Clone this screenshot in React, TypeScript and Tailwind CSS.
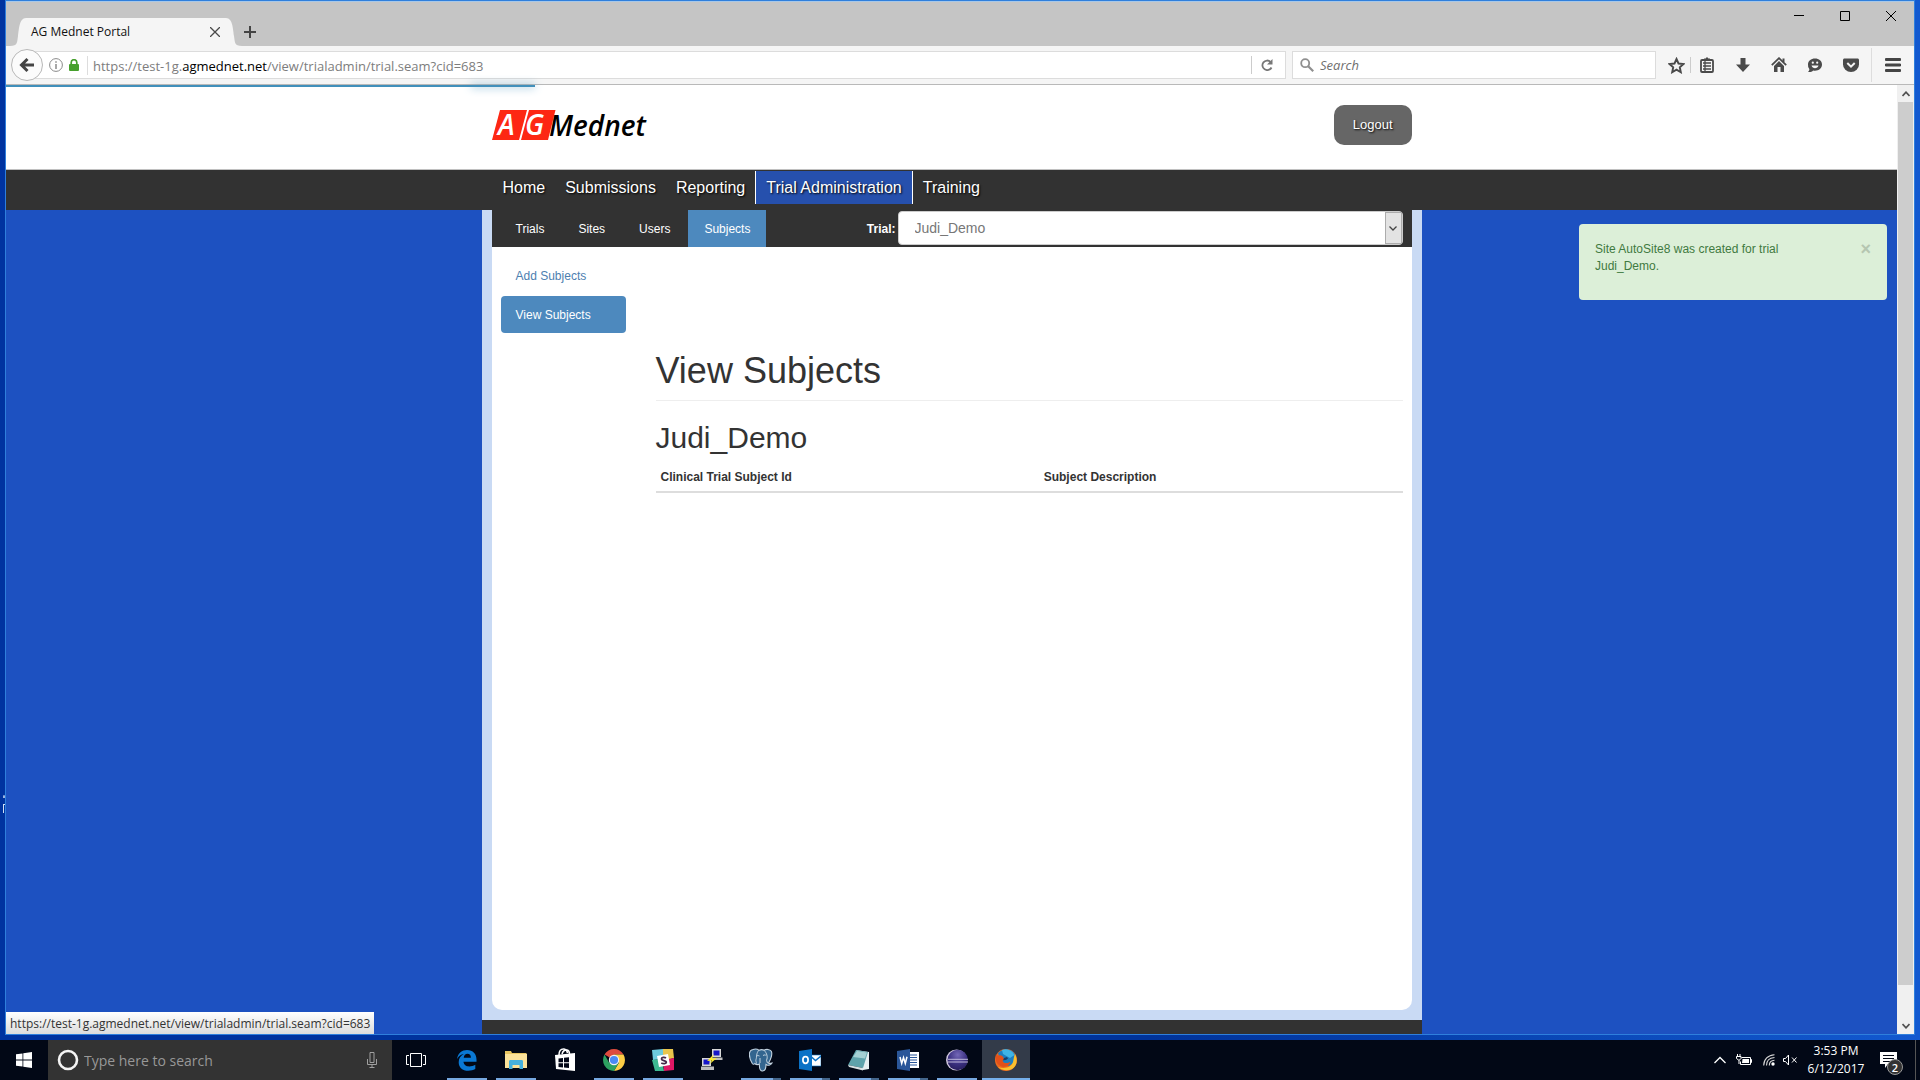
import React from "react";

const UI = "font-['Open_Sans','Noto_Sans',sans-serif]";

type TaskItem = { name: string; icon: React.ReactNode; open?: "single" | "stack" | "active" };

function Svg({ size, box, children }: { size: string; box: string; children: React.ReactNode }) {
  return (
    <svg className={"block shrink-0 " + size} viewBox={box} fill="none" aria-hidden="true">
      {children}
    </svg>
  );
}

const EdgeIcon = (
  <Svg size="size-[22px]" box="0 0 22 22">
    <path
      d="M1 10C2 4 6 1 11 1c6 0 9.500 4 9.500 9.500v2.300H7.500c.2 3 2.600 4.700 5.700 4.700 2.200 0 4.300-.6 6.100-1.700v4.300c-2 1.200-4.400 1.700-7 1.700-6 0-9.600-3.300-9.600-8.600 0-3.500 1.900-6.500 5.100-8.100C5 5.500 2.700 7.200 1 10Zm6.700-1.300h7.200c0-2.600-1.200-4-3.500-4-2 0-3.300 1.500-3.700 4Z"
      fill="#0a78d4"
    />
  </Svg>
);
const FolderIcon = (
  <Svg size="size-[22px]" box="0 0 22 22">
    <path d="M0 2h6l1 2h14.500v15H0Z" fill="#e8c560" />
    <path d="M0 5h22v14H0Z" fill="#fbe29a" />
    <path d="M4 12.500c0-1 .6-1.500 1.500-1.500h11c1 0 1.500.5 1.500 1.500V20h-3.500v-4h-7v4H4Z" fill="#45b0dc" />
  </Svg>
);
const StoreIcon = (
  <Svg size="h-[24px] w-[22px]" box="0 0 22 24">
    <path d="M5 7c0-4 2-6 4.500-6S13 3 13.500 5M8 6c1-3 3-4.500 5-4s2.500 2 2.500 4" stroke="#fff" strokeWidth="1.500" />
    <path d="M1 7 21 5v18L2 21Z" fill="#fff" />
    <path d="m4.500 10.500 4.500-.6v4.300H4.500Zm5.500-.7 5-.6v5h-5Zm-5.500 5.400H9v4.200l-4.500-.5Zm5.500 0h5v4.900l-5-.6Z" fill="#020617" />
  </Svg>
);
const ChromeIcon = (
  <Svg size="size-[22px]" box="0 0 22 22">
    <path d="M11 11 1.500 5.500A11 11 0 0 1 20.500 5.500H11Z" fill="#dd4b3e" />
    <path d="M11 11V5.500h9.500A11 11 0 0 1 11 22l4.800-8.200Z" fill="#fccd45" />
    <path d="M11 11l4.800 2.800L11 22A11 11 0 0 1 1.500 5.500l4.700 8.200Z" fill="#2da160" />
    <circle cx="11" cy="11" r="5.200" fill="#f4f4f4" />
    <circle cx="11" cy="11" r="4.100" fill="#4a8af4" />
  </Svg>
);
const SlackIcon = (
  <Svg size="size-[22px]" box="0 0 22 22">
    <path d="M0 1 11 0v10L1 11Z" fill="#6ecadc" />
    <path d="M11 0h10l1 9-11 3Z" fill="#e9c54b" />
    <path d="m0 11 10-1 2 12H3Z" fill="#3eb991" />
    <path d="m11 11 11-2v12l-10 1Z" fill="#e01765" />
    <path d="m5 7 11-2 2 11-11 2Z" fill="#fff" />
    <path d="M14 9c-1.500-1-4.500-.8-4.500 1 0 2 4.800 1 4.800 3.200 0 1.700-3.200 1.900-5 .8" stroke="#472a49" strokeWidth="1.800" />
  </Svg>
);
const PuttyIcon = (
  <Svg size="size-[22px]" box="0 0 22 22">
    <path d="M11 0h9v8h-9ZM1 9h9v8H1Z" fill="#d8d8d8" />
    <path d="M12.500 1.500h6v5h-6ZM2.500 10.500h6v5h-6Z" fill="#1717c8" />
    <path d="M10 8.500h11.500v2.500H10ZM0 17.500h13V21H0Z" fill="#bdbdbd" />
    <path d="m13 5-7 7 5-.5-3 4 8-6.500-5 .5Z" fill="#ffee2e" />
  </Svg>
);
const PostgresIcon = (
  <Svg size="size-[24px]" box="0 0 24 24">
    <path
      d="M4 1.500c3-1 5 0 6 .7 2-.8 4-.6 5 0 2-1.200 6-1.200 7.300 1 1.500 3-.8 9-2.800 11.800 1 .8 2.500.3 3.500 0-1 2-3.500 2.500-5 2l-1-.5c0 3-.2 6.500-3.500 6.500-3.500 0-3-4-3.200-7-1.500.8-3 1-4.500-.5-.8 1-1.700 1-2.500 0C1.500 12.500 0 8.500.500 5 .8 3 2 2 4 1.500Z"
      fill="#33658f"
      stroke="#c3d3e0"
      strokeWidth="1.100"
    />
    <path d="M10 2.200C7 5 8 9 7 11.500c-.5 1.500.5 3 .5 4M15 2.200c3 3 4 7 2.500 10l1 3M10.500 8c-2-1-3 0-3 .5M14 7.500c1.500-1 3-.5 3 0M11 15V10" stroke="#c3d3e0" strokeWidth="1" />
  </Svg>
);
const OutlookIcon = (
  <Svg size="size-[22px]" box="0 0 22 22">
    <path d="M12 6h10v11H12Z" fill="#fff" stroke="#0b72c6" strokeWidth=".6" />
    <path d="m12 7.500 4.500 4L22 7" stroke="#0b72c6" strokeWidth="1.500" />
    <path d="m0 2 13-2v22L0 20Z" fill="#0b72c6" />
    <ellipse cx="6.500" cy="11" rx="2.600" ry="3.300" stroke="#fff" strokeWidth="1.700" />
  </Svg>
);
const NotepadIcon = (
  <Svg size="size-[22px]" box="0 0 22 22">
    <path d="M8 1 21 3v17L15 21Z" fill="#e6eef0" />
    <path d="M8 1 20 3l-5 16L0 16Z" fill="#5fa3ab" />
    <path d="m9 2 10 1.500-2 6L5 8Z" fill="#a4d0d3" />
    <path d="m0 16 15 3v2.500L1 18Z" fill="#d8e2e4" />
  </Svg>
);
const WordIcon = (
  <Svg size="size-[22px]" box="0 0 22 22">
    <path d="M12 3h10v16H12Z" fill="#fff" />
    <path d="M13 6h7M13 8.500h7M13 11h7M13 13.500h7M13 16h7" stroke="#2a5699" strokeWidth="1.100" />
    <path d="m0 2 13-2v22L0 20Z" fill="#2a5699" />
    <path d="m3 8 1.700 6.500L6.500 8.500l1.800 6L10 7.800" stroke="#fff" strokeWidth="1.500" />
  </Svg>
);
const EclipseIcon = (
  <Svg size="size-[22px]" box="0 0 22 22">
    <defs>
      <radialGradient id="eclipseBall" cx="0.5" cy="0.25" r="0.75">
        <stop offset="0" stopColor="#7468b8" />
        <stop offset="0.600" stopColor="#3a3080" />
        <stop offset="1" stopColor="#281f5e" />
      </radialGradient>
    </defs>
    <circle cx="10.500" cy="11" r="10.500" fill="#cfc6de" />
    <circle cx="11.700" cy="11" r="10.200" fill="url(#eclipseBall)" />
    <path d="M2 10.300h20M2 13h20" stroke="#cfc8e4" strokeWidth=".9" />
  </Svg>
);
const FirefoxIcon = (
  <Svg size="size-[24px]" box="0 0 24 24">
    <circle cx="12" cy="12" r="11" fill="#ec6a1e" />
    <path d="M4 5a11 11 0 0 1 14-2c3 2 4 6 3 11l-6 4-8-3Z" fill="#1d7ec0" />
    <path d="M8 2c5-2 10 0 12.500 5L16 10 9 6Z" fill="#3fb4e6" />
    <path d="M21 6c3 6 2 12-3 15-5 2.500-11 1-14-2 6 2 13 1 15-5 .8-3 .7-5 2-8Z" fill="#f9c02f" />
    <path d="M2 6c0 1 1.500 1.500 3 1.500C7 7 9 8 9.500 10c2.500 0 1.500 2-1 2.500.5 3 5 3.500 8 1-1 5-6 6.500-10 4.500C2 16 1 11 2 6Z" fill="#e2501a" />
    <path d="m10 10 3-1 1 1.500-2 1.500-3 .3Z" fill="#16406b" />
  </Svg>
);

const tasks: TaskItem[] = [
  { name: "Microsoft Edge", icon: EdgeIcon, open: "single" },
  { name: "File Explorer", icon: FolderIcon, open: "single" },
  { name: "Store", icon: StoreIcon },
  { name: "Google Chrome", icon: ChromeIcon, open: "single" },
  { name: "Slack", icon: SlackIcon, open: "single" },
  { name: "PuTTY", icon: PuttyIcon },
  { name: "pgAdmin", icon: PostgresIcon, open: "stack" },
  { name: "Outlook", icon: OutlookIcon, open: "stack" },
  { name: "Notepad", icon: NotepadIcon, open: "stack" },
  { name: "Word", icon: WordIcon, open: "stack" },
  { name: "Eclipse", icon: EclipseIcon, open: "single" },
  { name: "Firefox", icon: FirefoxIcon, open: "active" },
];

function TitleBar() {
  return (
    <div className="flex h-[45px] shrink-0 items-end bg-[#c5c5c5] shadow-[inset_0_1px_0_#a8c8e8]">
      <div className="flex h-[28px] items-end pl-1">
        <svg className="block h-[28px] w-4" viewBox="0 0 16 28" aria-hidden="true">
          <path d="M0 28c8 0 7-4 8-10S9 0 16 0v28Z" fill="#f5f5f5" />
        </svg>
        <div className="flex h-[28px] w-[200px] items-center justify-between bg-[#f5f5f5] pr-[6px] pl-[5px]">
          <span className="text-xs text-[#111]">AG Mednet Portal</span>
          <button type="button" aria-label="Close tab">
            <Svg size="size-[10px]" box="0 0 10 10">
              <path d="m0 0 10 10M10 0 0 10" stroke="#4a4a4a" strokeWidth="1.300" />
            </Svg>
          </button>
        </div>
        <svg className="block h-[28px] w-4" viewBox="0 0 16 28" aria-hidden="true">
          <path d="M16 28c-8 0-7-4-8-10S7 0 0 0v28Z" fill="#f5f5f5" />
        </svg>
      </div>
      <button type="button" aria-label="New tab" className="mb-2 ml-0.5">
        <Svg size="size-3" box="0 0 12 12">
          <path d="M6 0v12M0 6h12" stroke="#444" strokeWidth="2" />
        </Svg>
      </button>
      <div className="ml-auto flex items-center gap-9 self-start pt-[10px] pr-[18px]">
        <button type="button" aria-label="Minimize">
          <Svg size="size-[10px]" box="0 0 10 10">
            <path d="M0 4.500h10" stroke="#000" />
          </Svg>
        </button>
        <button type="button" aria-label="Maximize">
          <Svg size="size-[10px]" box="0 0 10 10">
            <path d="M.5.5h9v9h-9Z" stroke="#000" />
          </Svg>
        </button>
        <button type="button" aria-label="Close">
          <Svg size="size-[10px]" box="0 0 10 10">
            <path d="m0 0 10 10M10 0 0 10" stroke="#000" />
          </Svg>
        </button>
      </div>
    </div>
  );
}

function NavBar() {
  return (
    <div className="flex h-[39px] shrink-0 items-center border-b border-[#b9b9b9] bg-[#f5f5f5] pl-[5px]">
      <button
        type="button"
        aria-label="Back"
        className="z-10 flex size-8 shrink-0 items-center justify-center rounded-full border border-[#b8b8b8] bg-[#fbfbfb]"
      >
        <Svg size="size-4" box="0 0 16 16">
          <path d="M15 8H3M8.500 2 2.500 8l6 6" stroke="#444" strokeWidth="3" />
        </Svg>
      </button>
      <div className="-ml-2 flex h-[28px] grow items-center border border-[#dcdcdc] bg-white pl-[13px]">
        <Svg size="size-[14px]" box="0 0 14 14">
          <circle cx="7" cy="7" r="6.400" stroke="#8a8a8a" />
          <path d="M7 6v5M7 3.200v1.600" stroke="#8a8a8a" strokeWidth="1.500" />
        </Svg>
        <div className="ml-[6px] mr-2">
          <Svg size="h-3 w-[10px]" box="0 0 10 12">
            <path d="M2.200 6V3.500a2.800 2.800 0 0 1 5.600 0V6" stroke="#46a02c" strokeWidth="1.700" />
            <rect y="5" width="10" height="7" rx="1" fill="#46a02c" />
          </Svg>
        </div>
        <div className="border-l border-[#ddd] pt-px pl-[5px] text-[13px] leading-[18px] whitespace-nowrap text-[#7d7d7d]">
          https://test-1g.<span className="text-black">agmednet.net</span>/view/trialadmin/trial.seam?cid=683
        </div>
        <button type="button" aria-label="Reload" className="ml-auto border-l border-[#ccc] py-[3px] pr-3 pl-[9px]">
          <Svg size="size-3" box="0 0 12 12">
            <path d="M10.500 8.500A4.800 4.800 0 1 1 9.500 2.800" stroke="#777" strokeWidth="1.800" />
            <path d="M11.500 0v5.500H6Z" fill="#777" />
          </Svg>
        </button>
      </div>
      <label className="ml-[6px] flex h-[28px] w-[364px] items-center gap-[6px] border border-[#dcdcdc] bg-white pl-[7px]">
        <Svg size="size-[14px]" box="0 0 14 14">
          <circle cx="5.200" cy="5.200" r="4" stroke="#8f8f8f" strokeWidth="1.800" />
          <path d="m8.200 8.200 5 5" stroke="#8f8f8f" strokeWidth="2.200" />
        </Svg>
        <input
          type="text"
          aria-label="Search"
          placeholder="Search"
          className="min-w-0 grow bg-transparent pt-px text-[13px] italic outline-none placeholder:text-[#6f6f6f]"
        />
      </label>
      <div className="flex items-center pl-3">
        <button type="button" aria-label="Bookmark" className="pr-[5px]">
          <Svg size="size-[17px]" box="0 0 17 17">
            <path d="m8.500 2 2 4.500 5 .5-3.700 3.300 1 4.900-4.300-2.500-4.300 2.500 1-4.900L1.500 7l5-.5Z" stroke="#4a4a4a" strokeWidth="1.900" />
          </Svg>
        </button>
        <div className="flex items-center gap-5 border-l border-[#ccc] pl-2">
          <button type="button" aria-label="Bookmarks list">
            <Svg size="size-4" box="0 0 16 16">
              <path d="M5 3V1.500h1.500L8 0l1.500 1.500H11V3" fill="#4a4a4a" />
              <rect x="2" y="3" width="12" height="12" rx="1" stroke="#4a4a4a" strokeWidth="1.800" />
              <path d="M4 6h8M4 9h8M4 12h8M6 4v10" stroke="#4a4a4a" strokeWidth="1.300" />
            </Svg>
          </button>
          <button type="button" aria-label="Downloads">
            <Svg size="size-4" box="0 0 16 16">
              <path d="M5.500 1h5v6.500H15L8 15 1 7.500h4.500Z" fill="#4a4a4a" />
            </Svg>
          </button>
          <button type="button" aria-label="Home">
            <Svg size="size-4" box="0 0 16 16">
              <path d="m.8 8.200 7.200-7 7.200 7" stroke="#4a4a4a" strokeWidth="1.800" />
              <path d="m3 9 5-5 5 5v6H9.500v-5h-3v5H3ZM11.500 1.500h2V5h-2Z" fill="#4a4a4a" />
            </Svg>
          </button>
          <button type="button" aria-label="Chat">
            <Svg size="size-4" box="0 0 16 16">
              <path d="M8 1.500c4 0 7 2.500 7 6s-3 6.200-7 6.200c-.6 0-1.200 0-1.800-.2C5 15 3 15.200 1 15c1-.8 1.500-2 1.300-3A6 6 0 0 1 1 7.500c0-3.500 3-6 7-6Z" fill="#4a4a4a" />
              <path d="M4.500 8.500c1 3.500 6 3.500 7 0Z" fill="#f5f5f5" />
              <circle cx="5.800" cy="5.700" r="1.100" fill="#f5f5f5" />
              <circle cx="10.200" cy="5.700" r="1.100" fill="#f5f5f5" />
            </Svg>
          </button>
          <button type="button" aria-label="Pocket">
            <Svg size="size-4" box="0 0 16 16">
              <path d="M1.500 1.500h13c.8 0 1.500.6 1.500 1.500v4.500a8 7.500 0 0 1-16 0V3c0-.9.700-1.500 1.500-1.500Z" fill="#4a4a4a" />
              <path d="m4.300 6 3.700 3.600L11.700 6" stroke="#f5f5f5" strokeWidth="2" />
            </Svg>
          </button>
        </div>
        <button type="button" aria-label="Menu" className="ml-3 flex h-[34px] items-center border-l border-[#ddd] px-[13px]">
          <Svg size="h-[14px] w-4" box="0 0 16 14">
            <path d="M1 1.500h14M1 7h14M1 12.500h14" stroke="#444" strokeWidth="2.800" strokeLinecap="round" />
          </Svg>
        </button>
      </div>
    </div>
  );
}

function Logo() {
  return (
    <a href="#home" aria-label="AG Mednet" className="mt-4 block">
      <svg className="block h-12 w-[180px]" viewBox="0 -8 180 48" aria-hidden="true">
        <path d="M8 1h27l-8 30H0Z" fill="#fd2713" />
        <path d="M37 1h26.500L56 31H29Z" fill="#fd2713" />
        <g className="font-['Open_Sans',sans-serif] font-semibold italic" fontSize="28">
          <text x="6" y="26" fill="#fff">
            A
          </text>
          <text x="33" y="26" fill="#fff">
            G
          </text>
          <text x="57" y="27" fill="#000">
            Mednet
          </text>
        </g>
      </svg>
    </a>
  );
}

const mainLinks = ["Home", "Submissions", "Reporting", "Trial Administration", "Training"];

function Page() {
  return (
    <div className="flex min-w-0 grow flex-col bg-[#1d51c1] font-['Liberation_Sans',Arial,sans-serif] text-xs">
      <header className="relative h-[85px] shrink-0 border-b border-[#c0c0c0] bg-white">
        <div className="absolute top-0 left-0 h-0.5 w-[28%] bg-[#4190bb]">
          <div className="ml-auto h-0.5 w-16 shadow-[0_0_8px_#4190bb]" />
        </div>
        <div className="mx-auto flex max-w-[920px] items-start justify-between">
          <Logo />
          <button
            type="button"
            className="mt-5 h-10 rounded-[10px] bg-[#666] px-[19px] text-[13px] text-white [text-shadow:1px_1px_2px_#000]"
          >
            Logout
          </button>
        </div>
      </header>
      <nav className="h-10 shrink-0 bg-[#323232]">
        <div className="mx-auto flex max-w-[920px] pt-px pl-px text-base text-white">
          {mainLinks.map((l) => (
            <a
              key={l}
              href={"#" + l}
              className={
                "h-[33px] px-[10px] leading-[33px] [text-shadow:1px_1px_2px_#000] " +
                (l === "Trial Administration" ? "border-x border-white bg-[#2650ad]" : "")
              }
            >
              {l}
            </a>
          ))}
        </div>
      </nav>
      <div className="flex min-h-0 grow">
        <div className="flex-1" />
        <main className="flex w-[940px] flex-col">
          <div className="flex grow flex-col bg-[#c9daf4] px-[10px] pb-[10px]">
            <div className="flex h-[37px] items-center bg-[#323232] pl-2 text-white">
              <div className="flex gap-0.5 self-stretch leading-[38px]">
                <a href="#trials" className="px-4">Trials</a>
                <a href="#sites" className="px-4">Sites</a>
                <a href="#users" className="px-4">Users</a>
                <a href="#subjects" className="bg-[#4d89be] px-4">Subjects</a>
              </div>
              <label htmlFor="trial" className="mr-0.5 ml-auto font-bold">
                Trial:
              </label>
              <div className="relative mr-[9px] mb-px w-[505px]">
                <select
                  id="trial"
                  className="block h-[34px] w-full appearance-none rounded border border-[#ccc] bg-white px-4 text-sm text-[#777]"
                >
                  <option>Judi_Demo</option>
                </select>
                <div className="pointer-events-none absolute inset-y-px right-px flex w-[17px] items-center justify-center border border-[#acacac] bg-[#e3e3e3]">
                  <Svg size="h-[5px] w-2" box="0 0 8 5">
                    <path d="m.5.5 3.500 3.500L7.500.5" stroke="#444" strokeWidth="1.300" />
                  </Svg>
                </div>
              </div>
            </div>
            <div className="flex grow rounded-b-[10px] bg-white pr-[9px] pl-[9px]">
              <aside className="flex w-[125px] shrink-0 flex-col gap-0.5 pt-[10px] leading-[17px]">
                <a href="#add" className="px-[15px] pt-[11px] pb-[9px] text-[#4d80b0]">Add Subjects</a>
                <a href="#view" className="rounded bg-[#4d89be] px-[15px] pt-[11px] pb-[9px] text-white">View Subjects</a>
              </aside>
              <section className="ml-[30px] grow pt-[104px] text-[#333]">
                <h1 className="border-b border-[#eee] pb-[9px] text-4xl leading-10">View Subjects</h1>
                <h2 className="mt-5 mb-[10px] text-3xl leading-[33px]">Judi_Demo</h2>
                <table className="w-full table-fixed text-left">
                  <thead>
                    <tr className="border-b-2 border-[#ddd] leading-[17px]">
                      <th className="w-[51.3%] px-[5px] py-[5px]">Clinical Trial Subject Id</th>
                      <th className="px-[5px] py-[5px]">Subject Description</th>
                    </tr>
                  </thead>
                </table>
              </section>
            </div>
          </div>
          <footer className="h-[14px] shrink-0 bg-[#323232]" />
        </main>
        <div className="flex-1">
          <div role="status" className="mt-[14px] mr-[10px] ml-auto flex h-[76px] w-[308px] justify-between rounded bg-[#dcefd8] py-[17px] pr-4 pl-4 leading-[17px] text-[#3f7a41]">
            <p className="w-[220px]">Site AutoSite8 was created for trial Judi_Demo.</p>
            <button type="button" aria-label="Dismiss" className="h-[17px] text-lg leading-[17px] font-bold text-[#b5c6b1]">
              ×
            </button>
          </div>
        </div>
      </div>
    </div>
  );
}

function Scrollbar() {
  return (
    <div className="flex w-[17px] shrink-0 flex-col bg-[#f0f0f0]" aria-hidden="true">
      <div className="flex h-[17px] items-center justify-center">
        <Svg size="h-[6px] w-2" box="0 0 8 6">
          <path d="m.5 5 3.500-3.800L7.500 5" stroke="#505050" strokeWidth="1.700" />
        </Svg>
      </div>
      <div className="grow">
        <div className="mx-px h-[96.500%] bg-[#cdcdcd]" />
      </div>
      <div className="flex h-[17px] items-center justify-center">
        <Svg size="h-[6px] w-2" box="0 0 8 6">
          <path d="m.5 1 3.500 3.800L7.500 1" stroke="#505050" strokeWidth="1.700" />
        </Svg>
      </div>
    </div>
  );
}

function Taskbar() {
  return (
    <div className="flex h-10 shrink-0 bg-[#020816] text-xs text-white">
      <button type="button" aria-label="Start" className="flex w-12 items-center justify-center">
        <Svg size="size-4" box="0 0 16 16">
          <path d="m0 2.300 6.500-.9v6.200H0Zm7.300-1L16 0v7.600H7.300ZM0 8.400h6.500v6.200L0 13.700Zm7.300 0H16V16l-8.700-1.300Z" fill="#fff" />
        </Svg>
      </button>
      <label className="flex w-[344px] items-center bg-[#333] pr-[14px] pl-[9px]">
        <Svg size="size-[22px]" box="0 0 22 22">
          <circle cx="11" cy="11" r="9" stroke="#f4f4f4" strokeWidth="2.600" />
        </Svg>
        <input
          type="text"
          aria-label="Type here to search"
          placeholder="Type here to search"
          className="ml-[5px] min-w-0 grow bg-transparent pt-0.5 text-sm outline-none placeholder:text-[#989898]"
        />
        <Svg size="h-4 w-3" box="0 0 12 16">
          <path d="M4 .500h4v10H4ZM1.500 7v5.500h9V7M6 12.500v3M3.500 15.500h5" stroke="#a0a0a0" />
        </Svg>
      </label>
      <button type="button" aria-label="Task view" className="flex w-12 items-center justify-center">
        <Svg size="h-4 w-5" box="0 0 20 16">
          <path d="M4.500 1.500h11v13h-11ZM3 3.500H.500v9H3M17 3.500h2.500v9H17" stroke="#fff" />
        </Svg>
      </button>
      <div className="ml-[3px] flex gap-px">
        {tasks.map((t) => (
          <button
            key={t.name}
            type="button"
            aria-label={t.name}
            className={"flex w-12 flex-col items-center " + (t.open === "active" ? "bg-[#333b49]" : "")}
          >
            <span className="flex h-[38px] items-center pt-px">{t.icon}</span>
            {t.open === "active" && <span className="h-0.5 w-full bg-[#76b0ec]" />}
            {t.open === "single" && <span className="h-0.5 w-10 bg-[#76a8e0]" />}
            {t.open === "stack" && <span className="h-0.5 w-10 border-r-8 border-[#44668c] bg-[#76a8e0]" />}
          </button>
        ))}
      </div>
      <div className="ml-auto flex items-center">
        <Svg size="h-2 w-3" box="0 0 12 8">
          <path d="m.5 7 5.500-5.500L11.500 7" stroke="#fff" strokeWidth="1.300" />
        </Svg>
        <div className="ml-[10px]">
          <Svg size="h-3 w-4" box="0 0 16 12">
            <path d="M5.500 3.500h9v7H4.500v-3M14.500 5.500h1v3h-1M1.500 0v2.500M4 0v2.500M.500 2.500h4.500v2L3.500 6h-1L.500 4.500ZM3 6v4" stroke="#fff" />
            <path d="M6.500 5h6.500v4H6Z" fill="#fff" />
          </Svg>
        </div>
        <div className="ml-[11px]">
          <Svg size="size-3" box="0 0 12 12">
            <path d="M.7 11.500C.7 5.500 5 1 11.500.7M3.500 11.500c0-4.500 3-7.700 8-8M6.300 11.500c0-3 2-5 5.200-5.200" stroke="#d5d5d5" strokeWidth="1.100" />
            <circle cx="10" cy="10" r="1.700" fill="#fff" />
          </Svg>
        </div>
        <div className="ml-2">
          <Svg size="h-3 w-4" box="0 0 16 12">
            <path d="M.500 4.500h2l3-3.500v10l-3-3.500h-2ZM9 3.500l4.500 5M13.500 3.500l-4.500 5" stroke="#fff" />
          </Svg>
        </div>
        <div className="ml-[7px] w-[60px] text-center leading-[18px]">
          <div>3:53 PM</div>
          <div>6/12/2017</div>
        </div>
        <button type="button" aria-label="Notifications" className="relative ml-[14px]">
          <Svg size="h-4 w-[17px]" box="0 0 17 16">
            <path d="M0 0h17v12H8l-3 4v-4H0Z" fill="#fff" />
            <path d="M3 3.500h11M3 6.500h11M3 9.500h8" stroke="#020816" />
          </Svg>
          <span className="absolute top-[7px] left-[7px] flex size-4 items-center justify-center rounded-full border border-[#999] bg-[#333] text-[11px] leading-none font-semibold">
            2
          </span>
        </button>
        <div className="ml-[18px] h-10 w-[5px] border-l border-[#555]" />
      </div>
    </div>
  );
}

export default function App() {
  return (
    <div className={"flex h-screen flex-col overflow-hidden bg-[linear-gradient(90deg,#0033a0_0%,#00339a_60%,#1259d0_100%)] " + UI}>
      <div className="relative flex min-h-0 grow flex-col px-[5px] pb-[5px]">
        <svg className="absolute top-[794px] left-0 h-5 w-[5px]" viewBox="0 0 5 20" aria-hidden="true">
          <path d="M3 3h2M4 1v3M3.500 10v9M3.500 10.500H5" stroke="#cfe0f5" strokeWidth="1" fill="none" />
        </svg>
        <div className="relative flex min-h-0 grow flex-col border border-[#2f7fdc]">
          <TitleBar />
          <NavBar />
          <div className="flex min-h-0 grow">
            <Page />
            <Scrollbar />
          </div>
          <div className="absolute bottom-0 left-0 h-[22px] bg-linear-to-b from-white to-[#dcdcdc] px-1 text-xs leading-6 text-[#333]">
            https://test-1g.agmednet.net/view/trialadmin/trial.seam?cid=683
          </div>
        </div>
      </div>
      <Taskbar />
    </div>
  );
}
